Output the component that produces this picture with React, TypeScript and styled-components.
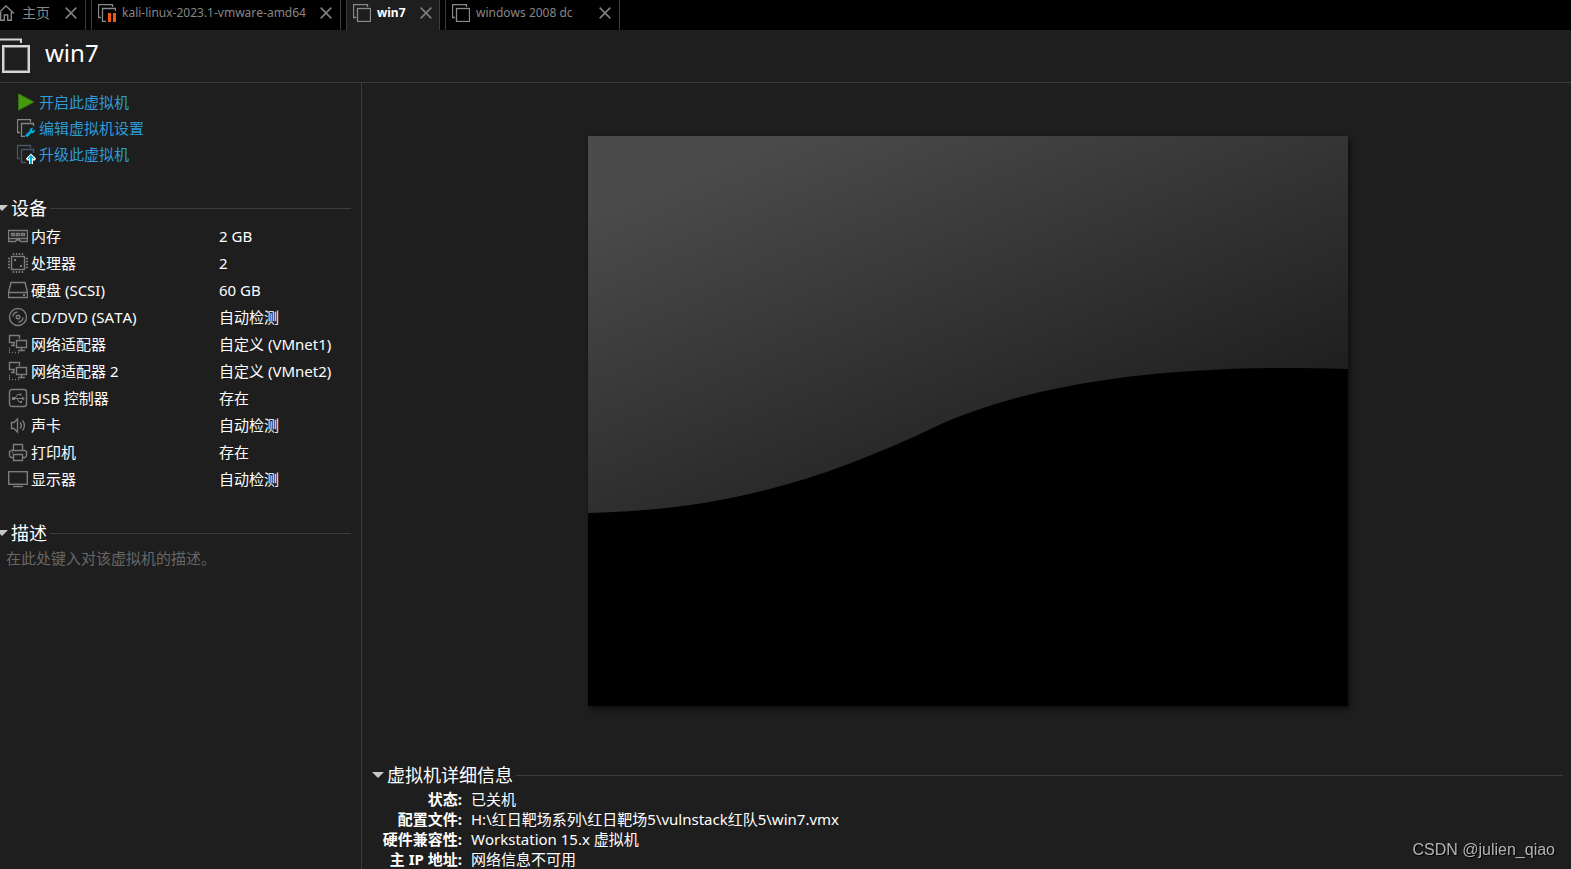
import React from "react";
import styled, { createGlobalStyle } from "styled-components";

const LINE = "#3c3c3c";
const BG = "#1e1e1e";

const GlobalStyle = createGlobalStyle`
  * { box-sizing: border-box; }
  body {
    margin: 0;
    background: ${BG};
    color: #fff;
    font-family: "Noto Sans", "Noto Sans CJK SC", sans-serif;
    font-size: 15px;
    font-kerning: none;
  }
  button { font: inherit; color: inherit; background: none; border: 0; padding: 0; cursor: pointer; }
  svg { display: block; flex: none; }
`;

const Window = styled.div`
  display: flex;
  flex-direction: column;
  height: 100vh;
  overflow: hidden;
`;

const TabBar = styled.nav`
  display: flex;
  flex: none;
  gap: 5px;
  height: 30px;
  background: #000;
`;

const Tab = styled.div<{ $active?: boolean; $home?: boolean; $min?: number }>`
  display: flex;
  align-items: center;
  justify-content: space-between;
  min-width: ${(p) => p.$min ?? 0}px;
  padding: 0 ${(p) => (p.$active ? 7 : 8)}px 4px ${(p) => (p.$home ? 0 : 6)}px;
  gap: ${(p) => (p.$home ? 15 : 8)}px;
  border: solid ${LINE};
  border-width: 0 1px 0 ${(p) => (p.$home ? 0 : 1)}px;
  background: ${(p) => (p.$active ? BG : "#000")};
`;

const TabButton = styled.button<{ $active?: boolean; $home?: boolean }>`
  display: flex;
  align-items: center;
  gap: ${(p) => (p.$home ? 7 : 6)}px;
  color: ${(p) => (p.$active ? "#fff" : "#868686")};
  font-size: ${(p) => (p.$home ? 14 : 12)}px;
  font-weight: ${(p) => (p.$active ? 700 : 400)};
  line-height: 26px;
  white-space: nowrap;
`;

const Header = styled.header`
  display: flex;
  flex: none;
  align-items: center;
  gap: 14px;
  height: 53px;
  border-bottom: 1px solid ${LINE};
`;

const Title = styled.h1`
  margin: 0;
  padding-bottom: 6px;
  font-size: 24px;
  font-weight: 400;
  line-height: 34px;
`;

const Body = styled.div`
  display: flex;
  flex: 1;
  min-height: 0;
`;

const Sidebar = styled.aside`
  flex: none;
  width: 362px;
  padding-right: 10px;
  border-right: 1px solid ${LINE};
`;

const Actions = styled.ul`
  margin: 0;
  padding: 6px 0 0 17px;
  list-style: none;
`;

const ActionLink = styled.a`
  display: inline-flex;
  align-items: center;
  gap: 4px;
  height: 26px;
  color: #2d9bd8;
  line-height: 26px;
  text-decoration: none;
  vertical-align: top;
`;

const ActionItem = styled.li`
  height: 26px;
`;

const Section = styled.section<{ $flush?: boolean }>`
  margin-top: ${(p) => (p.$flush ? 0 : 28)}px;
`;

const SectionHead = styled.div`
  display: flex;
  align-items: center;
  gap: 3px;
  height: 26px;
  margin-bottom: 1px;
  &::after {
    content: "";
    flex: 1;
    height: 1px;
    background: ${LINE};
  }
`;

const SectionToggle = styled.button`
  display: flex;
  align-items: center;
  gap: 3px;
`;

const SectionTitle = styled.h2`
  margin: 0;
  font-size: 18px;
  font-weight: 400;
  line-height: 26px;
`;

const DeviceTable = styled.table`
  width: 100%;
  border-collapse: collapse;
  line-height: 26px;
  white-space: nowrap;
`;

const DeviceRow = styled.tr`
  height: 27px;
`;

const DeviceName = styled.th`
  width: 219px;
  padding: 0 0 0 8px;
  font-weight: 400;
  text-align: left;
`;

const DeviceLabel = styled.div`
  display: flex;
  align-items: center;
  gap: 3px;
`;

const DeviceValue = styled.td`
  padding: 0;
`;

const Description = styled.textarea`
  display: block;
  width: 100%;
  height: 66px;
  padding: 0 6px;
  border: 0;
  outline: 0;
  resize: none;
  background: transparent;
  color: #fff;
  font: inherit;
  line-height: 22px;
  &::placeholder { color: #666; opacity: 1; }
`;

const Main = styled.main`
  flex: 1;
  min-width: 0;
  padding: 53px 8px 0 10px;
`;

const Preview = styled.div`
  width: 760px;
  max-width: 100%;
  aspect-ratio: 4 / 3;
  margin: 0 auto 56px;
  background: #000;
  box-shadow: 2px 3px 5px rgba(0, 0, 0, 0.6);
`;

const Details = styled.dl`
  display: grid;
  grid-template-columns: 90px 1fr;
  column-gap: 9px;
  margin: 0;
  line-height: 20px;
`;

const DetailName = styled.dt`
  font-weight: 700;
  text-align: right;
  white-space: nowrap;
`;

const DetailValue = styled.dd`
  margin: 0;
`;

const Watermark = styled.div`
  position: fixed;
  right: 16px;
  bottom: 8px;
  color: #b4b4b4;
  font-family: "Liberation Sans", sans-serif;
  font-size: 16px;
  line-height: 22px;
  text-shadow: 1px 1px 1px #000;
`;

const VmIcon = ({ paused }: { paused?: boolean }) => (
  <svg width="18" height="18" viewBox="0 0 18 18" aria-hidden="true">
    {paused ? (
      <>
        <path d="M3 13.5H.5V.5h14V3M17.5 7V4.5h-13v13H8" fill="none" stroke="#8a8a8a" strokeWidth="1.3" />
        <path d="M10 9h3v9h-3zM15 9h3v9h-3z" fill="#f2590f" />
      </>
    ) : (
      <g fill="none" stroke="#8a8a8a" strokeWidth="1.3">
        <path d="M3 13.5H.5V.5h14V3" />
        <rect x="4.5" y="4.5" width="13" height="13" />
      </g>
    )}
  </svg>
);

const HomeIcon = () => (
  <svg width="15" height="16" viewBox="0 0 15 16" aria-hidden="true">
    <path d="M-2 8.5 6 .9l8 7.6M.7 7v8.3h3.6V10h3.4v5.3h3.6V7" fill="none" stroke="#868686" strokeWidth="1.4" />
  </svg>
);

const CloseIcon = () => (
  <svg width="12" height="12" viewBox="0 0 12 12" aria-hidden="true">
    <path d="m.7.7 10.6 10.6M11.3.7.7 11.3" stroke="#7c7c7c" strokeWidth="1.7" />
  </svg>
);

const HeaderIcon = () => (
  <svg width="31" height="36" viewBox="0 0 31 36" aria-hidden="true">
    <path d="M0 1.5h21V5" fill="none" stroke="#d6d6d6" strokeWidth="2" />
    <rect x="3" y="8" width="26" height="26" fill="none" stroke="#d6d6d6" strokeWidth="2" />
    <rect x="4.5" y="9.5" width="23" height="23" fill="none" stroke="#777" />
  </svg>
);

const PlayIcon = () => (
  <svg width="18" height="18" viewBox="0 0 18 18" aria-hidden="true">
    <path d="M1.5.8 17 9 1.5 17.2z" fill="#459a0d" stroke="#37750f" strokeWidth=".8" />
  </svg>
);

const EditIcon = () => (
  <svg width="18" height="18" viewBox="0 0 18 18" aria-hidden="true">
    <path d="M3 13.5H.5V.5h13V3M16.5 7V4.5h-12v13H8" fill="none" stroke="#868686" strokeWidth="1.3" />
    <path d="m9 17.5 4.5-4.5" stroke="#00acd8" strokeWidth="2.6" />
    <path d="M17.8 10.2 16 12l-1.2-1.2 1.6-2c-2.4-.4-4.2 1.4-3.8 3.5l1.9 2c2 .3 3.9-1.4 3.3-4.1z" fill="#00acd8" />
  </svg>
);

const UpgradeIcon = () => (
  <svg width="18" height="18" viewBox="0 0 18 18" overflow="visible" aria-hidden="true">
    <path d="M3 13.5H.5V.5h13V3M16.5 8V4.5h-12v13H9" fill="none" stroke="#485563" strokeWidth="1.3" />
    <path d="m14 8.500 5 5-1 2h-2V19h-4v-3.500h-2l-1-2z" fill="#fff" />
    <path d="m14 9.800 3.400 3.600-.7.900L15 12.800V19h-2v-6.200l-1.700 1.500-.7-.9z" fill="#00acd8" />
  </svg>
);

const deviceShapes: Record<string, React.ReactNode> = {
  memory: (
    <>
      <path d="M.5 4.5h19v11h-7l-1-1.5h-3l-1 1.5h-7zM0 12.5h20" />
      <path d="M3.5 7.5h3v2h-3zM8.5 7.5h3v2h-3zM13.5 7.5h3v2h-3z" />
    </>
  ),
  cpu: (
    <>
      <rect x="3.5" y="3.5" width="13" height="13" />
      <path d="M5.5 0v2m3-2v2m3-2v2m3-2v2M5.5 18v2m3-2v2m3-2v2m3-2v2M0 5.5h2m-2 3h2m-2 3h2m-2 3h2M18 5.5h2m-2 3h2m-2 3h2m-2 3h2" />
      <path d="M6 6h2v2H6zM12 12h2v2h-2z" fill="#7c7c7c" stroke="none" />
    </>
  ),
  disk: (
    <>
      <path d="M.5 12.5 3 2.5h14l2.5 10v5H.5zM.5 12.5h19" />
      <path d="M15 14h2v2h-2z" fill="#7c7c7c" stroke="none" />
    </>
  ),
  disc: (
    <>
      <circle cx="10" cy="10" r="8.5" />
      <circle cx="10" cy="10" r="1.8" />
      <path d="M5 9.5A5 5 0 0 1 9.5 5M15 10.5a5 5 0 0 1-4.5 4.5" />
    </>
  ),
  network: (
    <>
      <path d="M7 8.5H1.5v-7h10V5M5.5 9v2M3 11.5h4" />
      <path d="M8.5 6.5h10v7h-10zM13.5 14v2M10 16.5h7" />
      <path d="M1 14.5h1M1 16.5h1M1 18.5h1M4 18.5h1M7 18.5h1M10 18.5h1" />
    </>
  ),
  usb: (
    <>
      <rect x="1.5" y="1.5" width="17" height="17" rx="2.5" />
      <path d="M5 10.5h10M7 10.5l2.5-4H12M9 10.5l2 3.5h2" strokeWidth="1" />
      <path d="M4 9h3v3H4zM14 8.5l3 2-3 2zM11.5 5.5h2v2h-2zM12 13h2v2h-2z" fill="#7c7c7c" stroke="none" />
    </>
  ),
  sound: (
    <>
      <path d="M3.500 7.500H6L9.500 4v13L6 13.500H3.500z" />
      <path d="M12 7.500a4.500 4.500 0 0 1 0 6M14.500 5.500a7.500 7.500 0 0 1 0 10" />
    </>
  ),
  printer: (
    <>
      <path d="M5.5 8V2.5h9V8M5 15.5H3L1.5 14V9.5L3 8.5h14l1.5 1V14L17 15.5h-2" />
      <path d="M5.5 12.5h9v6h-9zM4 10.5h1" />
    </>
  ),
  display: (
    <>
      <rect x=".7" y="2.7" width="18.6" height="12.6" />
      <path d="M5 17.5h10" />
    </>
  ),
};

const DeviceIcon = ({ kind }: { kind: string }) => (
  <svg width="20" height="23" viewBox="0 -2 20 23" fill="none" stroke="#7c7c7c" strokeWidth="1.4" aria-hidden="true">
    {deviceShapes[kind]}
  </svg>
);

const SideArrow = () => (
  <svg width="8" height="6" viewBox="0 0 8 6" aria-hidden="true">
    <path d="M0 0h8L2 6 0 4z" fill="#c8c8c8" />
  </svg>
);

const Arrow = () => (
  <svg width="12" height="6" viewBox="0 0 12 6" aria-hidden="true">
    <path d="M0 0h12L6 6z" fill="#c8c8c8" />
  </svg>
);

const PreviewImage = () => (
  <svg width="100%" height="100%" viewBox="0 0 760 570" role="img" aria-label="win7">
    <defs>
      <linearGradient id="sheen" gradientUnits="userSpaceOnUse" x1="26" y1="64" x2="222" y2="540">
        <stop offset="0" stopColor="#4b4b4b" />
        <stop offset="1" stopColor="#171717" />
      </linearGradient>
    </defs>
    <path d="M0 0h760v233C560 226 430 253 349 290 240 342 140 374 0 377z" fill="url(#sheen)" />
  </svg>
);

const tabs = [
  { name: "kali-linux-2023.1-vmware-amd64", paused: true, min: 250 },
  { name: "win7", active: true, min: 94 },
  { name: "windows 2008 dc", min: 175 },
];

const actions = [
  { label: "开启此虚拟机", icon: <PlayIcon /> },
  { label: "编辑虚拟机设置", icon: <EditIcon /> },
  { label: "升级此虚拟机", icon: <UpgradeIcon /> },
];

const devices = [
  ["memory", "内存", "2 GB"],
  ["cpu", "处理器", "2"],
  ["disk", "硬盘 (SCSI)", "60 GB"],
  ["disc", "CD/DVD (SATA)", "自动检测"],
  ["network", "网络适配器", "自定义 (VMnet1)"],
  ["network", "网络适配器 2", "自定义 (VMnet2)"],
  ["usb", "USB 控制器", "存在"],
  ["sound", "声卡", "自动检测"],
  ["printer", "打印机", "存在"],
  ["display", "显示器", "自动检测"],
];

const details = [
  ["状态:", "已关机"],
  ["配置文件:", "H:\\红日靶场系列\\红日靶场5\\vulnstack红队5\\win7.vmx"],
  ["硬件兼容性:", "Workstation 15.x 虚拟机"],
  ["主 IP 地址:", "网络信息不可用"],
];

export default function App() {
  return (
    <Window>
      <GlobalStyle />
      <TabBar>
        <Tab $home>
          <TabButton $home>
            <HomeIcon />
            主页
          </TabButton>
          <button aria-label="关闭 主页">
            <CloseIcon />
          </button>
        </Tab>
        {tabs.map((t) => (
          <Tab key={t.name} $active={t.active} $min={t.min}>
            <TabButton $active={t.active}>
              <VmIcon paused={t.paused} />
              {t.name}
            </TabButton>
            <button aria-label={`关闭 ${t.name}`}>
              <CloseIcon />
            </button>
          </Tab>
        ))}
      </TabBar>
      <Header>
        <HeaderIcon />
        <Title>win7</Title>
      </Header>
      <Body>
        <Sidebar>
          <Actions>
            {actions.map((a) => (
              <ActionItem key={a.label}>
                <ActionLink href="#">
                  {a.icon}
                  {a.label}
                </ActionLink>
              </ActionItem>
            ))}
          </Actions>
          <Section>
            <SectionHead>
              <SectionToggle aria-expanded="true">
                <SideArrow />
                <SectionTitle>设备</SectionTitle>
              </SectionToggle>
            </SectionHead>
            <DeviceTable>
              <tbody>
                {devices.map(([kind, name, value]) => (
                  <DeviceRow key={name}>
                    <DeviceName scope="row">
                      <DeviceLabel>
                        <DeviceIcon kind={kind} />
                        {name}
                      </DeviceLabel>
                    </DeviceName>
                    <DeviceValue>{value}</DeviceValue>
                  </DeviceRow>
                ))}
              </tbody>
            </DeviceTable>
          </Section>
          <Section>
            <SectionHead>
              <SectionToggle aria-expanded="true">
                <SideArrow />
                <SectionTitle id="description-title">描述</SectionTitle>
              </SectionToggle>
            </SectionHead>
            <Description aria-labelledby="description-title" placeholder="在此处键入对该虚拟机的描述。" />
          </Section>
        </Sidebar>
        <Main>
          <Preview>
            <PreviewImage />
          </Preview>
          <Section $flush>
            <SectionHead>
              <SectionToggle aria-expanded="true">
                <Arrow />
                <SectionTitle>虚拟机详细信息</SectionTitle>
              </SectionToggle>
            </SectionHead>
            <Details>
              {details.map(([name, value]) => (
                <React.Fragment key={name}>
                  <DetailName>{name}</DetailName>
                  <DetailValue>{value}</DetailValue>
                </React.Fragment>
              ))}
            </Details>
          </Section>
        </Main>
      </Body>
      <Watermark>CSDN @julien_qiao</Watermark>
    </Window>
  );
}
